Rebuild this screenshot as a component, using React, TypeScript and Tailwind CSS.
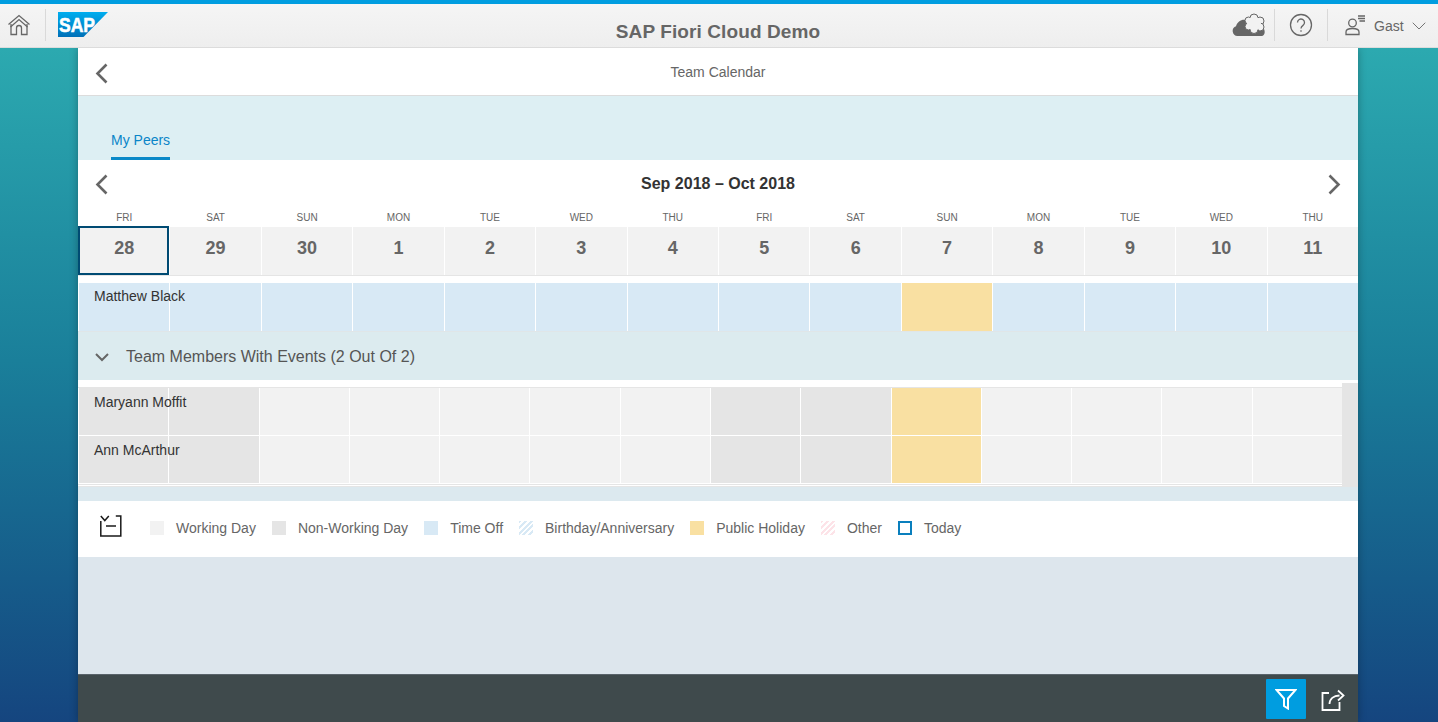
import React from 'react';
import { ChevronDown } from 'lucide-react';

const days = [
  { d: 'FRI', n: '28' }, { d: 'SAT', n: '29' }, { d: 'SUN', n: '30' }, { d: 'MON', n: '1' },
  { d: 'TUE', n: '2' }, { d: 'WED', n: '3' }, { d: 'THU', n: '4' }, { d: 'FRI', n: '5' },
  { d: 'SAT', n: '6' }, { d: 'SUN', n: '7' }, { d: 'MON', n: '8' }, { d: 'TUE', n: '9' },
  { d: 'WED', n: '10' }, { d: 'THU', n: '11' },
];

const memberCell = (i: number) => {
  if (i === 9) return 'bg-[#f9e0a2]';
  if (i === 0 || i === 1 || i === 7 || i === 8) return 'bg-[#e5e5e5]';
  return 'bg-[#f2f2f2]';
};

const HomeIcon = () => (
  <svg width="24" height="22" viewBox="0 0 24 22" fill="none" stroke="#666" strokeWidth="1.3">
    <path d="M1.5 10.5 12 1.5l10.500 9" />
    <path d="M4 10v10.500h5.500v-6.500a2.500 2.500 0 0 1 5 0v6.500H20V10" />
    <path d="M3.500 13 12 5.500 20.500 13" />
  </svg>
);

const SapLogo = () => (
  <svg width="50" height="25" viewBox="0 0 50 25">
    <defs>
      <linearGradient id="sapg" x1="0" y1="0" x2="0" y2="1">
        <stop offset="0" stopColor="#00aeef" />
        <stop offset="1" stopColor="#0070b8" />
      </linearGradient>
    </defs>
    <path d="M0 0h50L25.500 25H0z" fill="url(#sapg)" />
    <text x="1" y="19.500" fontFamily="Liberation Sans" fontWeight="700" fontSize="21" fill="#fff" stroke="#fff" strokeWidth="0.6" textLength="36" lengthAdjust="spacingAndGlyphs">SAP</text>
  </svg>
);

const CloudIcon = () => (
  <svg width="33" height="24" viewBox="0 0 33 24">
    <path d="M5.500 23a5 5 0 0 1-1.500-9.700C5.500 8.500 9.500 6 14 7h9c5 0 9 4 9 9 1.500 3 .5 7-2.500 7z" fill="#666" />
    <g fill="#f2f2f2" stroke="#666" strokeWidth="1">
      <circle cx="22" cy="5" r="4" />
      <circle cx="28" cy="8" r="4" />
      <circle cx="28" cy="14" r="4" />
      <circle cx="22" cy="16.500" r="4" />
      <circle cx="16.500" cy="13.500" r="3.500" />
      <circle cx="16.500" cy="7.500" r="3.500" />
    </g>
    <circle cx="22" cy="10.500" r="7" fill="#f2f2f2" />
  </svg>
);

const HelpIcon = () => (
  <svg width="24" height="24" viewBox="0 0 24 24" fill="none" stroke="#666" strokeWidth="1.3">
    <circle cx="12" cy="12" r="10.500" />
    <path d="M8.500 9.500a3.500 3.500 0 1 1 5.500 2.900c-1.300.9-2 1.600-2 3.100" />
    <path d="M12 17.300v1.500" />
  </svg>
);

const UserIcon = () => (
  <svg width="22" height="22" viewBox="0 0 22 22" fill="none" stroke="#666" strokeWidth="1.300">
    <circle cx="7.500" cy="9" r="3.800" />
    <path d="M1 20.500v-2.500c0-2.500 2.500-3.500 6.500-3.500s6.500 1 6.500 3.500v2.500z" />
    <path d="M13 2h7M13 4.500h7M14.500 7H20" />
  </svg>
);

const BackIcon = ({ flip }: { flip?: boolean }) => (
  <svg width="13" height="21" viewBox="0 0 13 21" fill="none" stroke="#666" strokeWidth="2.600" className={flip ? 'scale-x-[-1]' : ''}>
    <path d="M11.500 1.500 2.500 10.500l9 9" />
  </svg>
);

const CollapseIcon = () => (
  <svg width="22" height="22" viewBox="0 0 22 22" fill="none" stroke="#1a1a1a" strokeWidth="1.500">
    <path d="M.8 1 4.800 5.500 8.800 1" />
    <path d="M.8 6v15h20V1h-5" />
    <path d="M6 11h10" />
  </svg>
);

const FilterIcon = () => (
  <svg width="22" height="22" viewBox="0 0 22 22" fill="none" stroke="#fff" strokeWidth="2">
    <path d="M1.500 2h19l-7.500 8.500V20.500l-4-2.500v-7.500z" />
  </svg>
);

const ShareIcon = () => (
  <svg width="24" height="22" viewBox="0 0 24 22" fill="none" stroke="#fff" strokeWidth="1.800">
    <path d="M8 4H1.500v17h17v-8" />
    <path d="M8.500 15c0-5 4-8.500 10-8.500" />
    <path d="M17 1.500l5.500 5-5.500 5" />
  </svg>
);

const Swatch = ({ className, label }: { className: string; label: string }) => (
  <div className="flex items-center">
    <span className={`w-[14px] h-[14px] mr-[12px] ${className}`} />
    <span>{label}</span>
  </div>
);

export default function App() {
  return (
    <div className="h-[722px] overflow-hidden flex flex-col bg-gradient-to-b from-[#2fb0b3] via-[#1a7f9a] to-[#15457f] font-['Liberation_Sans',Arial,sans-serif]">
      {/* Shell header */}
      <header className="relative z-10 h-[48px] shrink-0 border-t-4 border-[#009de0] bg-gradient-to-b from-[#f5f5f5] to-[#eeeeee] flex items-center shadow-[inset_0_-1px_0_#dcdcdc]">
        <div className="w-[46px] h-[32px] border-r border-[#d9d9d9] flex items-center pl-[7px] mt-[-2px]">
          <HomeIcon />
        </div>
        <div className="ml-[12px] mt-[-3px] flex"><SapLogo /></div>
        <div className="flex-1 text-center text-[19px] font-bold text-[#666] mt-[12px] pl-[103px] tracking-[0.1px]">SAP Fiori Cloud Demo</div>
        <div className="flex items-center mt-[-2px]">
          <div className="w-[50px] h-[32px] flex items-center justify-end pr-[9px] border-r border-[#d9d9d9]"><CloudIcon /></div>
          <div className="w-[53px] h-[32px] flex items-center justify-center border-r border-[#d9d9d9]"><HelpIcon /></div>
          <div className="w-[110px] h-[32px] flex items-center pl-[17px] text-[14px] text-[#666]">
            <UserIcon />
            <span className="ml-[7px] mt-[2px]">Gast</span>
            <ChevronDown size={24} strokeWidth={0.9} className="ml-[3px] mt-[1px]" />
          </div>
        </div>
      </header>

      {/* App container */}
      <main className="w-[1280px] ml-[78px] flex-1 flex flex-col bg-[#dde6ed] shadow-[0_0_8px_rgba(0,0,0,0.3)]">
        <div className="h-[48px] bg-white border-b border-[#dcdcdc] flex items-center relative text-[14px] text-[#666] justify-center pt-[2px]">
          <div className="absolute left-[17px] top-[15px] flex"><BackIcon /></div>
          <span>Team Calendar</span>
        </div>

        <div className="h-[64px] bg-[#ddeff3] flex items-end pl-[33px]">
          <div className="h-[29px] border-b-[3px] border-[#0a89c8] text-[14px] text-[#0a85c8] leading-[18px]">My Peers</div>
        </div>

        {/* Calendar header */}
        <div className="bg-white h-[123px] flex flex-col">
          <div className="h-[48px] flex items-center justify-between px-[17px]">
            <BackIcon />
            <span className="text-[16px] font-bold text-[#333]">Sep 2018 – Oct 2018</span>
            <BackIcon flip />
          </div>
          <div className="grid grid-cols-[repeat(14,1fr)] h-[19px]">
            {days.map((x, i) => (
              <div key={i} className="pl-[1px] text-center text-[10px] text-[#666] leading-[19px]">{x.d}</div>
            ))}
          </div>
          <div className="grid grid-cols-[repeat(14,1fr)] h-[48px] border-b border-[#e5e5e5] box-content">
            {days.map((x, i) => (
              <div
                key={i}
                className={`bg-[#f2f2f2] flex items-center justify-center text-[18px] font-bold text-[#666] ${i === 0 ? 'border-2 border-[#004b73] pl-[1px] mt-[-1px] pb-[5px]' : 'border-l border-white pb-[6px]'}`}
              >
                {x.n}
              </div>
            ))}
          </div>
        </div>

        {/* My row */}
        <div className="grid grid-cols-[repeat(14,1fr)] h-[49px] relative border-b border-[#e0e6e8]">
          {days.map((x, i) => (
            <div key={i} className={`border-l border-white ${i === 9 ? 'bg-[#f9e0a2]' : 'bg-[#d8e9f5]'}`} />
          ))}
          <span className="absolute left-[16px] top-[5px] text-[14px] leading-[16px] text-[#333]">Matthew Black</span>
        </div>

        {/* Section */}
        <div className="h-[48px] bg-[#dcebef] flex items-center text-[16px] text-[#555] pt-[2px]">
          <svg width="14" height="9" viewBox="0 0 14 9" fill="none" stroke="#666" strokeWidth="2" className="ml-[17px]">
            <path d="M1 1l6 6 6-6" />
          </svg>
          <span className="ml-[17px]">Team Members With Events (2 Out Of 2)</span>
        </div>

        {/* Team rows */}
        <div className="bg-white h-[107px] flex">
          <div className="w-[1264px] pt-[7px] flex flex-col">
            <div className="border-t border-[#e5e5e5]" />
            {['Maryann Moffit', 'Ann McArthur'].map((name) => (
              <div key={name} className="grid grid-cols-[repeat(14,1fr)] h-[48px] relative">
                {days.map((x, i) => (
                  <div key={i} className={`border-l border-white border-b ${memberCell(i)}`} />
                ))}
                <span className="absolute left-[16px] top-[6px] text-[14px] leading-[16px] text-[#333]">{name}</span>
              </div>
            ))}
            <div className="border-t border-[#e5e5e5]" />
            <div className="border-t border-[#e5e5e5] mt-[1px]" />
          </div>
          <div className="w-[16px] bg-[#e5e5e5] mt-[3px] h-[105px]" />
        </div>

        <div className="h-[14px] bg-[#dce9ef]" />

        {/* Legend */}
        <div className="h-[56px] bg-white flex items-center text-[14px] text-[#666] pl-[22px] pb-[2px]">
          <div className="flex mr-[28px] mt-[-4px]"><CollapseIcon /></div>
          <div className="flex items-center gap-[16px]">
            <Swatch className="bg-[#f2f2f2]" label="Working Day" />
            <Swatch className="bg-[#e5e5e5]" label="Non-Working Day" />
            <Swatch className="bg-[#d8e9f5]" label="Time Off" />
            <Swatch className="bg-[repeating-linear-gradient(135deg,#d8e9f5_0,#d8e9f5_2px,#fff_2px,#fff_4px)]" label="Birthday/Anniversary" />
            <Swatch className="bg-[#f9e0a2]" label="Public Holiday" />
            <Swatch className="bg-[repeating-linear-gradient(135deg,#fde3e8_0,#fde3e8_2px,#fff_2px,#fff_4px)]" label="Other" />
            <Swatch className="border-2 border-[#0a7fbd]" label="Today" />
          </div>
        </div>

        <div className="flex-1" />

        {/* Footer */}
        <footer className="h-[48px] bg-[#3f4a4c] border-t border-[#59636a] flex items-center justify-end">
          <div className="w-[40px] h-[40px] bg-[#009de0] rounded-[1px] flex items-center justify-center mt-[1px]"><FilterIcon /></div>
          <div className="w-[52px] h-[40px] flex items-center justify-center mt-[2px] pl-[2px]"><ShareIcon /></div>
        </footer>
      </main>
    </div>
  );
}
